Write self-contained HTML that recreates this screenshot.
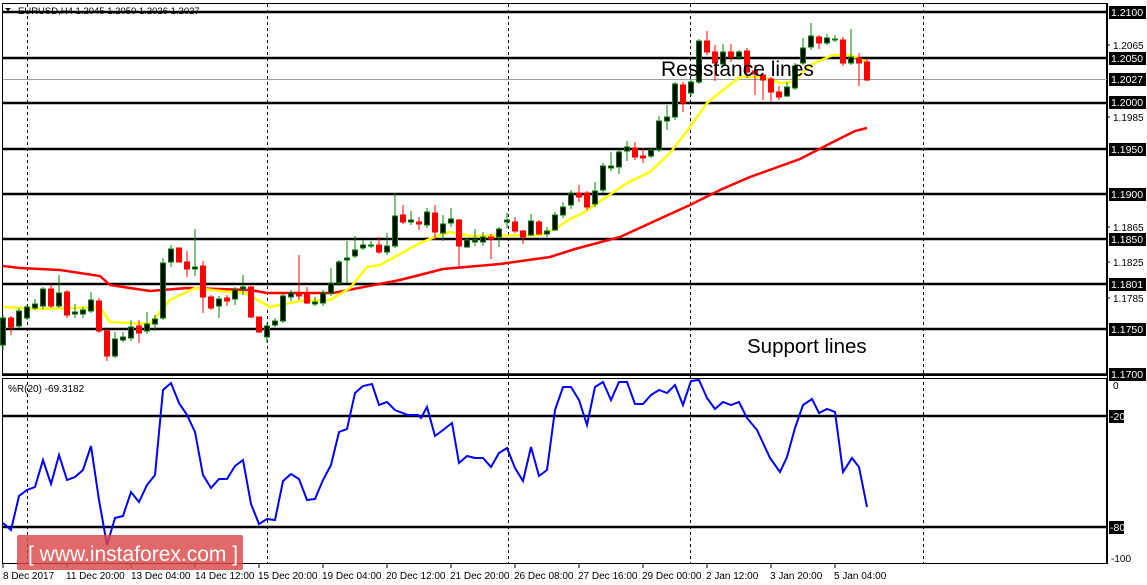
<!DOCTYPE html>
<html><head><meta charset="utf-8"><style>
html,body{margin:0;padding:0;background:#fff;}
body{width:1147px;height:585px;overflow:hidden;font-family:"Liberation Sans",sans-serif;}
svg{display:block}
.b line{stroke:#008000;stroke-width:1}
.b rect{fill:#000;stroke:#008000;stroke-width:1}
.r line{stroke:#f00;stroke-width:1}
.r rect{fill:#f00;stroke:#f00;stroke-width:1}
.ax{font-size:10px;font-family:"Liberation Sans",sans-serif;fill:#000}
.bx{fill:#000}
.bt{font-size:10.5px;fill:#fff;font-family:"Liberation Sans",sans-serif}
</style></head><body>
<svg width="1147" height="585" viewBox="0 0 1147 585" xmlns="http://www.w3.org/2000/svg">
<rect x="0" y="0" width="1147" height="585" fill="#fff"/>
<rect x="2.5" y="3.5" width="1104" height="372" fill="none" stroke="#000"/>
<rect x="2.5" y="378.5" width="1104" height="185" fill="none" stroke="#000"/>
<g stroke="#000" stroke-dasharray="3,3" stroke-width="1">
<line x1="27.5" y1="4" x2="27.5" y2="563"/>
<line x1="267.5" y1="4" x2="267.5" y2="563"/>
<line x1="508.5" y1="4" x2="508.5" y2="563"/>
<line x1="690.5" y1="4" x2="690.5" y2="563"/>
<line x1="923.5" y1="4" x2="923.5" y2="563"/>
</g>
<g stroke="#000" stroke-width="2.5">
<line x1="3" y1="12" x2="1107" y2="12"/>
<line x1="3" y1="58" x2="1107" y2="58"/>
<line x1="3" y1="103" x2="1107" y2="103"/>
<line x1="3" y1="149" x2="1107" y2="149"/>
<line x1="3" y1="194" x2="1107" y2="194"/>
<line x1="3" y1="239" x2="1107" y2="239"/>
<line x1="3" y1="284" x2="1107" y2="284"/>
<line x1="3" y1="329" x2="1107" y2="329"/>
<line x1="3" y1="374.5" x2="1107" y2="374.5"/>
<line x1="3" y1="416" x2="1107" y2="416"/>
<line x1="3" y1="527" x2="1107" y2="527"/>
</g>
<line x1="3" y1="79.5" x2="1107" y2="79.5" stroke="#a0a0a0" stroke-width="1"/>
<polyline fill="none" stroke="#f00" stroke-width="2.5" points="3,266 20,268 60,270 100,276 110,285 150,291 187,288 250,290 267,293 333,293 400,280 443,269 500,264 550,257 575,249 620,237 657,220 690,205 720,190 750,177 800,159 835,141 855,131 867,128"/>
<polyline fill="none" stroke="#ffff00" stroke-width="2.5" points="3,307 40,309 100,307 110,322 150,324 170,300 195,288 230,292 245,293 270,307 300,301 330,300 350,288 367,267 380,265 420,243 440,235 450,232 470,236 540,235 555,229 570,219 583,213 627,183 650,172 670,153 690,127 707,103 727,87 740,77 763,77 780,83 793,82 810,65 833,55 850,55 867,62"/>
<g class="b">
<line x1="3" y1="315" x2="3" y2="350"/><rect x="0.5" y="318" width="5" height="27"/>
<line x1="19" y1="308" x2="19" y2="328"/><rect x="16.5" y="311" width="5" height="15"/>
<line x1="27" y1="305" x2="27" y2="320"/><rect x="24.5" y="307" width="5" height="11"/>
<line x1="35" y1="299" x2="35" y2="310"/><rect x="32.5" y="304" width="5" height="4"/>
<line x1="43" y1="287" x2="43" y2="309"/><rect x="40.5" y="289" width="5" height="17"/>
<line x1="59" y1="275" x2="59" y2="308"/><rect x="56.5" y="293" width="5" height="13"/>
<line x1="75" y1="304" x2="75" y2="318"/><rect x="72.5" y="312" width="5" height="2"/>
<line x1="83" y1="307" x2="83" y2="318"/><rect x="80.5" y="310" width="5" height="4"/>
<line x1="91" y1="292" x2="91" y2="313"/><rect x="88.5" y="300" width="5" height="11"/>
<line x1="115" y1="332" x2="115" y2="358"/><rect x="112.5" y="339" width="5" height="17"/>
<line x1="123" y1="332" x2="123" y2="342"/><rect x="120.5" y="337" width="5" height="3"/>
<line x1="131" y1="320" x2="131" y2="341"/><rect x="128.5" y="327" width="5" height="11"/>
<line x1="147" y1="312" x2="147" y2="334"/><rect x="144.5" y="324" width="5" height="7"/>
<line x1="155" y1="315" x2="155" y2="331"/><rect x="152.5" y="319" width="5" height="5"/>
<line x1="163" y1="258" x2="163" y2="320"/><rect x="160.5" y="263" width="5" height="55"/>
<line x1="171" y1="245" x2="171" y2="267"/><rect x="168.5" y="249" width="5" height="13"/>
<line x1="195" y1="229" x2="195" y2="276"/><rect x="192.5" y="267" width="5" height="2"/>
<line x1="219" y1="296" x2="219" y2="318"/><rect x="216.5" y="299" width="5" height="7"/>
<line x1="235" y1="287" x2="235" y2="305"/><rect x="232.5" y="290" width="5" height="9"/>
<line x1="243" y1="275" x2="243" y2="295"/><rect x="240.5" y="287" width="5" height="2"/>
<line x1="267" y1="323" x2="267" y2="343"/><rect x="264.5" y="326" width="5" height="11"/>
<line x1="275" y1="318" x2="275" y2="327"/><rect x="272.5" y="321" width="5" height="4"/>
<line x1="283" y1="293" x2="283" y2="323"/><rect x="280.5" y="296" width="5" height="25"/>
<line x1="291" y1="290" x2="291" y2="301"/><rect x="288.5" y="293" width="5" height="4"/>
<line x1="315" y1="297" x2="315" y2="306"/><rect x="312.5" y="302" width="5" height="2"/>
<line x1="323" y1="290" x2="323" y2="306"/><rect x="320.5" y="293" width="5" height="10"/>
<line x1="331" y1="268" x2="331" y2="296"/><rect x="328.5" y="283" width="5" height="10"/>
<line x1="339" y1="260" x2="339" y2="286"/><rect x="336.5" y="262" width="5" height="21"/>
<line x1="347" y1="241" x2="347" y2="283"/><rect x="344.5" y="258" width="5" height="2"/>
<line x1="355" y1="236" x2="355" y2="258"/><rect x="352.5" y="250" width="5" height="6"/>
<line x1="363" y1="240" x2="363" y2="250"/><rect x="360.5" y="245" width="5" height="3"/>
<line x1="371" y1="241" x2="371" y2="248"/><rect x="368.5" y="245" width="5" height="1"/>
<line x1="387" y1="233" x2="387" y2="255"/><rect x="384.5" y="246" width="5" height="6"/>
<line x1="395" y1="193" x2="395" y2="248"/><rect x="392.5" y="216" width="5" height="30"/>
<line x1="411" y1="211" x2="411" y2="225"/><rect x="408.5" y="220" width="5" height="2"/>
<line x1="427" y1="208" x2="427" y2="228"/><rect x="424.5" y="212" width="5" height="13"/>
<line x1="443" y1="215" x2="443" y2="241"/><rect x="440.5" y="224" width="5" height="9"/>
<line x1="451" y1="208" x2="451" y2="227"/><rect x="448.5" y="219" width="5" height="4"/>
<line x1="467" y1="238" x2="467" y2="248"/><rect x="464.5" y="240" width="5" height="7"/>
<line x1="475" y1="229" x2="475" y2="246"/><rect x="472.5" y="240" width="5" height="2"/>
<line x1="483" y1="232" x2="483" y2="246"/><rect x="480.5" y="237" width="5" height="5"/>
<line x1="499" y1="227" x2="499" y2="247"/><rect x="496.5" y="229" width="5" height="8"/>
<line x1="507" y1="213" x2="507" y2="228"/><rect x="504.5" y="220" width="5" height="2"/>
<line x1="531" y1="214" x2="531" y2="236"/><rect x="528.5" y="221" width="5" height="14"/>
<line x1="547" y1="227" x2="547" y2="237"/><rect x="544.5" y="231" width="5" height="3"/>
<line x1="555" y1="212" x2="555" y2="231"/><rect x="552.5" y="215" width="5" height="15"/>
<line x1="563" y1="202" x2="563" y2="218"/><rect x="560.5" y="207" width="5" height="8"/>
<line x1="571" y1="190" x2="571" y2="209"/><rect x="568.5" y="193" width="5" height="12"/>
<line x1="595" y1="182" x2="595" y2="207"/><rect x="592.5" y="191" width="5" height="13"/>
<line x1="603" y1="163" x2="603" y2="193"/><rect x="600.5" y="166" width="5" height="24"/>
<line x1="611" y1="152" x2="611" y2="171"/><rect x="608.5" y="166" width="5" height="2"/>
<line x1="619" y1="150" x2="619" y2="174"/><rect x="616.5" y="152" width="5" height="15"/>
<line x1="627" y1="141" x2="627" y2="161"/><rect x="624.5" y="147" width="5" height="4"/>
<line x1="651" y1="148" x2="651" y2="158"/><rect x="648.5" y="150" width="5" height="6"/>
<line x1="659" y1="116" x2="659" y2="152"/><rect x="656.5" y="121" width="5" height="29"/>
<line x1="667" y1="105" x2="667" y2="130"/><rect x="664.5" y="117" width="5" height="4"/>
<line x1="675" y1="82" x2="675" y2="120"/><rect x="672.5" y="84" width="5" height="33"/>
<line x1="691" y1="80" x2="691" y2="96"/><rect x="688.5" y="82" width="5" height="11"/>
<line x1="699" y1="39" x2="699" y2="84"/><rect x="696.5" y="41" width="5" height="41"/>
<line x1="723" y1="44" x2="723" y2="66"/><rect x="720.5" y="52" width="5" height="12"/>
<line x1="739" y1="50" x2="739" y2="60"/><rect x="736.5" y="52" width="5" height="5"/>
<line x1="787" y1="82" x2="787" y2="97"/><rect x="784.5" y="87" width="5" height="9"/>
<line x1="795" y1="63" x2="795" y2="90"/><rect x="792.5" y="66" width="5" height="22"/>
<line x1="803" y1="38" x2="803" y2="65"/><rect x="800.5" y="48" width="5" height="15"/>
<line x1="811" y1="23" x2="811" y2="50"/><rect x="808.5" y="36" width="5" height="11"/>
<line x1="827" y1="34" x2="827" y2="45"/><rect x="824.5" y="38" width="5" height="5"/>
<line x1="835" y1="35" x2="835" y2="42"/><rect x="832.5" y="39" width="5" height="1"/>
<line x1="851" y1="29" x2="851" y2="65"/><rect x="848.5" y="57" width="5" height="6"/>
</g>
<g class="r">
<line x1="11" y1="316" x2="11" y2="335"/><rect x="8.5" y="318" width="5" height="9"/>
<line x1="51" y1="284" x2="51" y2="308"/><rect x="48.5" y="289" width="5" height="17"/>
<line x1="67" y1="290" x2="67" y2="318"/><rect x="64.5" y="292" width="5" height="23"/>
<line x1="99" y1="298" x2="99" y2="333"/><rect x="96.5" y="301" width="5" height="30"/>
<line x1="107" y1="329" x2="107" y2="361"/><rect x="104.5" y="331" width="5" height="25"/>
<line x1="139" y1="320" x2="139" y2="343"/><rect x="136.5" y="326" width="5" height="7"/>
<line x1="179" y1="248" x2="179" y2="262"/><rect x="176.5" y="248" width="5" height="14"/>
<line x1="187" y1="251" x2="187" y2="277"/><rect x="184.5" y="262" width="5" height="7"/>
<line x1="203" y1="261" x2="203" y2="313"/><rect x="200.5" y="266" width="5" height="31"/>
<line x1="211" y1="295" x2="211" y2="310"/><rect x="208.5" y="297" width="5" height="11"/>
<line x1="227" y1="295" x2="227" y2="306"/><rect x="224.5" y="298" width="5" height="3"/>
<line x1="251" y1="286" x2="251" y2="318"/><rect x="248.5" y="287" width="5" height="30"/>
<line x1="259" y1="317" x2="259" y2="333"/><rect x="256.5" y="317" width="5" height="15"/>
<line x1="299" y1="255" x2="299" y2="300"/><rect x="296.5" y="293" width="5" height="3"/>
<line x1="307" y1="287" x2="307" y2="304"/><rect x="304.5" y="294" width="5" height="9"/>
<line x1="379" y1="237" x2="379" y2="254"/><rect x="376.5" y="245" width="5" height="7"/>
<line x1="403" y1="205" x2="403" y2="224"/><rect x="400.5" y="215" width="5" height="7"/>
<line x1="419" y1="217" x2="419" y2="230"/><rect x="416.5" y="222" width="5" height="2"/>
<line x1="435" y1="205" x2="435" y2="240"/><rect x="432.5" y="213" width="5" height="19"/>
<line x1="459" y1="219" x2="459" y2="268"/><rect x="456.5" y="220" width="5" height="26"/>
<line x1="491" y1="234" x2="491" y2="259"/><rect x="488.5" y="237" width="5" height="2"/>
<line x1="515" y1="217" x2="515" y2="233"/><rect x="512.5" y="222" width="5" height="9"/>
<line x1="523" y1="230" x2="523" y2="244"/><rect x="520.5" y="231" width="5" height="6"/>
<line x1="539" y1="220" x2="539" y2="235"/><rect x="536.5" y="222" width="5" height="12"/>
<line x1="579" y1="185" x2="579" y2="202"/><rect x="576.5" y="193" width="5" height="4"/>
<line x1="587" y1="191" x2="587" y2="210"/><rect x="584.5" y="193" width="5" height="14"/>
<line x1="635" y1="142" x2="635" y2="160"/><rect x="632.5" y="148" width="5" height="9"/>
<line x1="643" y1="148" x2="643" y2="163"/><rect x="640.5" y="156" width="5" height="2"/>
<line x1="683" y1="82" x2="683" y2="112"/><rect x="680.5" y="85" width="5" height="18"/>
<line x1="707" y1="31" x2="707" y2="55"/><rect x="704.5" y="41" width="5" height="11"/>
<line x1="715" y1="45" x2="715" y2="81"/><rect x="712.5" y="52" width="5" height="11"/>
<line x1="731" y1="44" x2="731" y2="62"/><rect x="728.5" y="52" width="5" height="5"/>
<line x1="747" y1="48" x2="747" y2="78"/><rect x="744.5" y="51" width="5" height="21"/>
<line x1="755" y1="65" x2="755" y2="95"/><rect x="752.5" y="71" width="5" height="3"/>
<line x1="763" y1="73" x2="763" y2="100"/><rect x="760.5" y="75" width="5" height="5"/>
<line x1="771" y1="77" x2="771" y2="102"/><rect x="768.5" y="79" width="5" height="13"/>
<line x1="779" y1="86" x2="779" y2="100"/><rect x="776.5" y="92" width="5" height="5"/>
<line x1="819" y1="35" x2="819" y2="49"/><rect x="816.5" y="37" width="5" height="6"/>
<line x1="843" y1="37" x2="843" y2="66"/><rect x="840.5" y="40" width="5" height="23"/>
<line x1="859" y1="53" x2="859" y2="86"/><rect x="856.5" y="58" width="5" height="5"/>
<line x1="867" y1="58" x2="867" y2="81"/><rect x="864.5" y="62" width="5" height="18"/>
</g>
<text x="661" y="76" font-size="21" fill="#000" font-family="Liberation Sans, sans-serif">Resistance lines</text>
<text x="747" y="353" font-size="20.5" fill="#000" font-family="Liberation Sans, sans-serif">Support lines</text>
<polygon points="5,8 11,8 8,11" fill="#000"/>
<text x="18" y="14" style="font-size:9.5px" class="ax">EURUSD,H4  1.2045 1.2050 1.2026 1.2027</text>
<text x="8" y="392" class="ax">%R(20) -69.3182</text>
<polyline fill="none" stroke="#0000ff" stroke-width="2" points="3,523 11,530 19,496 27,490 35,487 43,460 51,484 59,455 67,480 75,477 83,470 91,446 99,500 107,545 115,518 123,516 131,492 139,502 147,485 155,475 163,390 171,383 179,403 187,415 195,432 203,475 211,488 219,479 227,479 235,466 243,460 251,504 259,524 267,519 275,520 283,481 291,474 299,479 307,500 315,499 323,480 331,465 339,432 347,429 355,393 363,386 372,384 379,405 387,402 395,410 400,412 408,415 418,415 421,418 427,407 435,436 443,430 452,423 459,463 467,456 475,458 483,458 491,467 499,453 507,448 515,468 523,481 531,447 539,476 547,470 555,410 563,387 571,387 579,400 587,425 595,387 603,382 611,400 619,382 627,382 635,404 643,404 651,395 659,390 667,393 675,385 683,405 691,381 699,380 707,398 715,409 723,402 731,405 739,402 747,418 757,430 770,458 780,472 787,457 795,428 803,405 812,399 819,413 827,409 835,412 843,472 852,458 859,467 867,507"/>
<line x1="1107.5" y1="3" x2="1107.5" y2="564" stroke="#000"/>
<g class="ax">
<text x="1113" y="49">1.2065</text>
<text x="1113" y="121">1.1985</text>
<text x="1113" y="231">1.1865</text>
<text x="1113" y="266">1.1825</text>
<text x="1113" y="302">1.1785</text>
<text x="1113" y="389">0</text>
<text x="1111" y="562">-100</text>
</g>
<g stroke="#000">
<line x1="1107" y1="45" x2="1110" y2="45"/><line x1="1107" y1="117" x2="1110" y2="117"/><line x1="1107" y1="227" x2="1110" y2="227"/><line x1="1107" y1="262" x2="1110" y2="262"/><line x1="1107" y1="298" x2="1110" y2="298"/>
</g>
<g>
<rect class="bx" x="1109" y="6" width="37" height="13"/><text class="bt" x="1111" y="16">1.2100</text>
<rect class="bx" x="1109" y="52" width="37" height="13"/><text class="bt" x="1111" y="62">1.2050</text>
<rect class="bx" x="1109" y="73" width="37" height="13"/><text class="bt" x="1111" y="83">1.2027</text>
<rect class="bx" x="1109" y="96" width="37" height="13"/><text class="bt" x="1111" y="106">1.2000</text>
<rect class="bx" x="1109" y="143" width="37" height="13"/><text class="bt" x="1111" y="153">1.1950</text>
<rect class="bx" x="1109" y="188" width="37" height="13"/><text class="bt" x="1111" y="198">1.1900</text>
<rect class="bx" x="1109" y="233" width="37" height="13"/><text class="bt" x="1111" y="243">1.1850</text>
<rect class="bx" x="1109" y="278" width="37" height="13"/><text class="bt" x="1111" y="288">1.1801</text>
<rect class="bx" x="1109" y="323" width="37" height="13"/><text class="bt" x="1111" y="333">1.1750</text>
<rect class="bx" x="1109" y="368" width="37" height="13"/><text class="bt" x="1111" y="378">1.1700</text>
<rect class="bx" x="1109" y="410" width="15" height="13"/><text class="bt" x="1110" y="420">-20</text>
<rect class="bx" x="1109" y="521" width="15" height="13"/><text class="bt" x="1110" y="531">-80</text>
</g>
<g stroke="#000">
<line x1="3" y1="564" x2="3" y2="568"/><line x1="67" y1="564" x2="67" y2="568"/><line x1="131" y1="564" x2="131" y2="568"/><line x1="195" y1="564" x2="195" y2="568"/><line x1="259" y1="564" x2="259" y2="568"/><line x1="323" y1="564" x2="323" y2="568"/><line x1="387" y1="564" x2="387" y2="568"/><line x1="451" y1="564" x2="451" y2="568"/><line x1="515" y1="564" x2="515" y2="568"/><line x1="579" y1="564" x2="579" y2="568"/><line x1="643" y1="564" x2="643" y2="568"/><line x1="707" y1="564" x2="707" y2="568"/><line x1="771" y1="564" x2="771" y2="568"/><line x1="835" y1="564" x2="835" y2="568"/>
</g>
<g class="ax">
<text x="3" y="579">8 Dec 2017</text>
<text x="66" y="579">11 Dec 20:00</text>
<text x="131" y="579">13 Dec 04:00</text>
<text x="195" y="579">14 Dec 12:00</text>
<text x="258" y="579">15 Dec 20:00</text>
<text x="322" y="579">19 Dec 04:00</text>
<text x="386" y="579">20 Dec 12:00</text>
<text x="450" y="579">21 Dec 20:00</text>
<text x="514" y="579">26 Dec 08:00</text>
<text x="578" y="579">27 Dec 16:00</text>
<text x="642" y="579">29 Dec 00:00</text>
<text x="706" y="579">2 Jan 12:00</text>
<text x="770" y="579">3 Jan 20:00</text>
<text x="834" y="579">5 Jan 04:00</text>
</g>
<rect x="17" y="535" width="226" height="35" rx="2" fill="#dc4848" fill-opacity="0.82"/>
<text x="28" y="561" font-size="21" fill="#fff" font-family="Liberation Sans, sans-serif">[  www.instaforex.com ]</text>
</svg>
</body></html>
